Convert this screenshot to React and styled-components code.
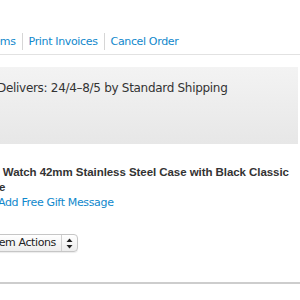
import React from 'react';
import styled, { createGlobalStyle } from 'styled-components';

const GlobalStyle = createGlobalStyle`
  html, body {
    margin: 0;
    padding: 0;
    background: #fff;
  }
  body {
    font-family: "DejaVu Sans", "Liberation Sans", sans-serif;
    color: #333;
    width: 300px;
    height: 300px;
    overflow: hidden;
  }
`;

const Page = styled.div`
  padding-top: 33px;
  width: 300px;
`;

const LinkBar = styled.div`
  display: flex;
  align-items: center;
  margin-left: -57px;
  height: 17px;
  white-space: nowrap;
`;

const NavLink = styled.a`
  font-size: 11px;
  letter-spacing: -0.35px;
  color: #1088cc;
  text-decoration: none;
  padding: 0 6px;
  line-height: 17px;
  border-left: ${(p) => (p.first ? 'none' : '1px solid #d6d6d6')};
`;

const Rule = styled.div`
  height: 1px;
  background: #e2e2e2;
  margin-top: 4px;
`;

const ShippingBox = styled.div`
  margin-top: 12px;
  margin-right: 2px;
  height: 77px;
  background: linear-gradient(#f3f3f3, #e7e7e7);
  padding-top: 14px;
  box-sizing: border-box;
`;

const Delivery = styled.div`
  font-size: 12px;
  letter-spacing: -0.3px;
  margin-left: -3px;
  white-space: nowrap;
`;

const Item = styled.div`
  margin-left: -32px;
  padding-top: 21px;
`;

const Title = styled.div`
  font-family: "Liberation Sans", Arial, sans-serif;
  font-size: 11.5px;
  font-weight: bold;
  letter-spacing: -0.06px;
  line-height: 15px;
  width: 325px;
  color: #333;
`;

const GiftLink = styled.a`
  display: block;
  font-size: 11px;
  letter-spacing: -0.35px;
  color: #1088cc;
  text-decoration: none;
  margin-left: 30px;
  line-height: 16px;
`;

const Select = styled.div`
  display: inline-flex;
  align-items: stretch;
  margin-top: 23px;
  margin-left: 15px;
  height: 16px;
  border: 1px solid #c6c6c6;
  border-radius: 4px;
  background: linear-gradient(#ffffff, #ededed);
  box-shadow: 0 1px 1px rgba(0, 0, 0, 0.08);
  font-size: 11px;
  letter-spacing: -0.4px;
  color: #222;
  overflow: hidden;
`;

const SelectLabel = styled.span`
  padding: 0 5px 0 8px;
  line-height: 16px;
`;

const SelectArrows = styled.span`
  width: 15px;
  border-left: 1px solid #d0d0d0;
  display: flex;
  align-items: center;
  justify-content: center;
`;

const BottomRule = styled.div`
  height: 2px;
  background: #cdcdcd;
  margin-top: 30px;
`;

export default function App() {
  return (
    <>
      <GlobalStyle />
      <Page>
        <LinkBar>
          <NavLink first>Return Items</NavLink>
          <NavLink>Print Invoices</NavLink>
          <NavLink>Cancel Order</NavLink>
        </LinkBar>
        <Rule />
        <ShippingBox>
          <Delivery>Delivers: 24/4–8/5 by Standard Shipping</Delivery>
        </ShippingBox>
        <Item>
          <Title>Apple Watch 42mm Stainless Steel Case with Black Classic Buckle</Title>
          <GiftLink>Add Free Gift Message</GiftLink>
          <Select>
            <SelectLabel>Item Actions</SelectLabel>
            <SelectArrows>
              <svg width="7" height="11" viewBox="0 0 7 11">
                <path d="M3.5 0.5 L6.5 4 L0.5 4 Z" fill="#222" />
                <path d="M3.5 10.5 L6.5 7 L0.5 7 Z" fill="#222" />
              </svg>
            </SelectArrows>
          </Select>
        </Item>
        <BottomRule />
      </Page>
    </>
  );
}
